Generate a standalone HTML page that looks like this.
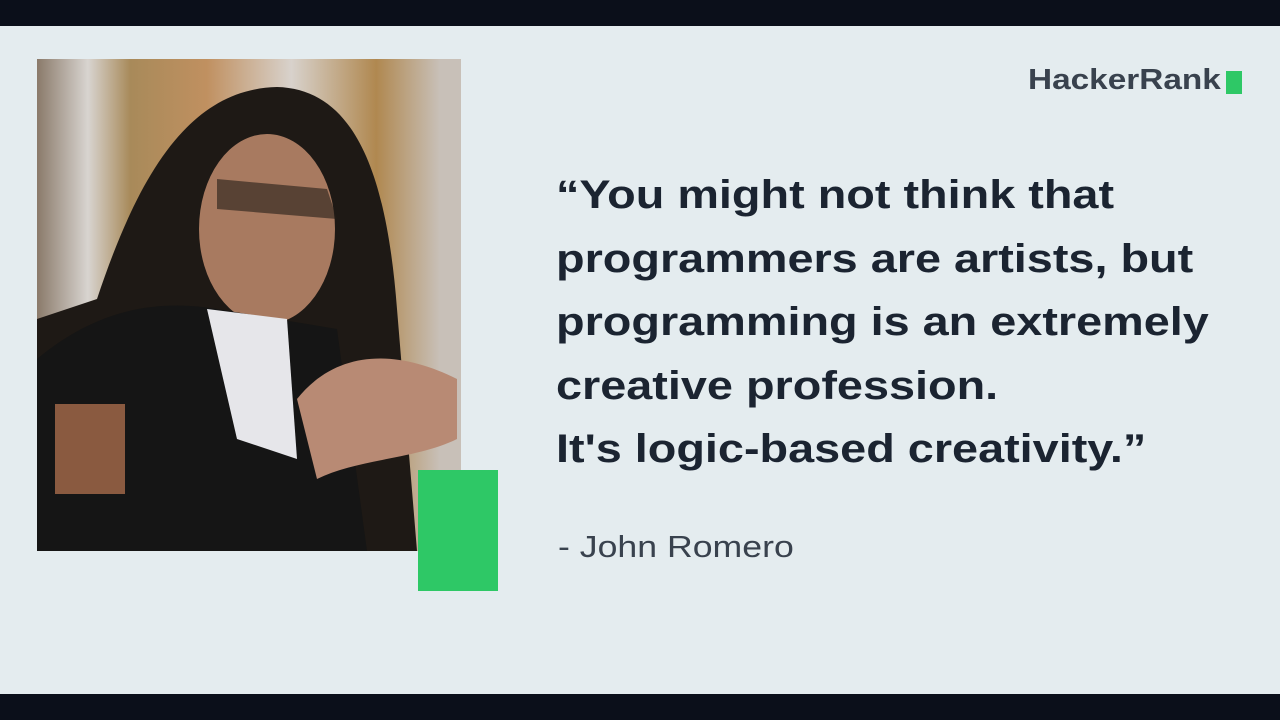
<!DOCTYPE html>
<html><head><style>
body{margin:0;width:1280px;height:720px;overflow:hidden;background:#e4ecef;font-family:"Liberation Sans",sans-serif;position:relative}
.band{position:absolute;left:0;width:1280px;background:#0b0f1a}
.photo{position:absolute;left:37px;top:59px;width:424px;height:492px;overflow:hidden;background:linear-gradient(90deg,#8a7a6a 0%,#d8d4d0 12%,#a88a5a 22%,#c09060 40%,#d8d2cc 60%,#b08850 80%,#c8c0b8 95%)}
.green{position:absolute;left:418px;top:470px;width:80px;height:121px;background:#2ec866}
.q{position:absolute;left:556px;top:164px;font-weight:bold;font-size:40px;line-height:63.5px;color:#1b2431;white-space:nowrap;transform:scaleX(1.17);transform-origin:0 0}
.a{position:absolute;left:558px;top:529px;font-size:31px;color:#39424e;transform:scaleX(1.15);transform-origin:0 0;white-space:nowrap}
.logo{position:absolute;left:1028px;top:64px;font-weight:bold;font-size:29px;color:#39424e;transform:scaleX(1.15);transform-origin:0 0;white-space:nowrap}
.lg{position:absolute;left:1226px;top:71px;width:16px;height:23px;background:#2ec866}
</style></head><body>
<div class="band" style="top:0;height:26px"></div>
<div class="band" style="top:694px;height:26px"></div>
<div class="photo">
<svg width="424" height="492" viewBox="0 0 424 492">
<path d="M60 240 C100 120 150 30 240 28 C320 30 350 120 360 250 L380 492 L0 492 L0 260 Z" fill="#1e1915"/>
<ellipse cx="230" cy="170" rx="68" ry="95" fill="#a87a60"/>
<path d="M180 120 L290 130 L300 160 L180 150 Z" fill="#231d18" opacity=".6"/>
<path d="M0 300 C60 250 120 240 180 250 L300 270 L330 492 L0 492 Z" fill="#151515"/>
<path d="M170 250 L200 380 L260 400 L250 260 Z" fill="#e6e6ea"/>
<path d="M260 340 C300 290 360 290 420 320 L420 380 C380 400 320 400 280 420 Z" fill="#b88a74"/>
<rect x="18" y="345" width="70" height="90" fill="#8a5a40"/>
</svg>
</div>
<div class="green"></div>
<div class="logo">HackerRank</div><div class="lg"></div>
<div class="q">“You might not think that<br>programmers are artists, but<br>programming is an extremely<br>creative profession.<br>It's logic-based creativity.”</div>
<div class="a">- John Romero</div>
</body></html>
